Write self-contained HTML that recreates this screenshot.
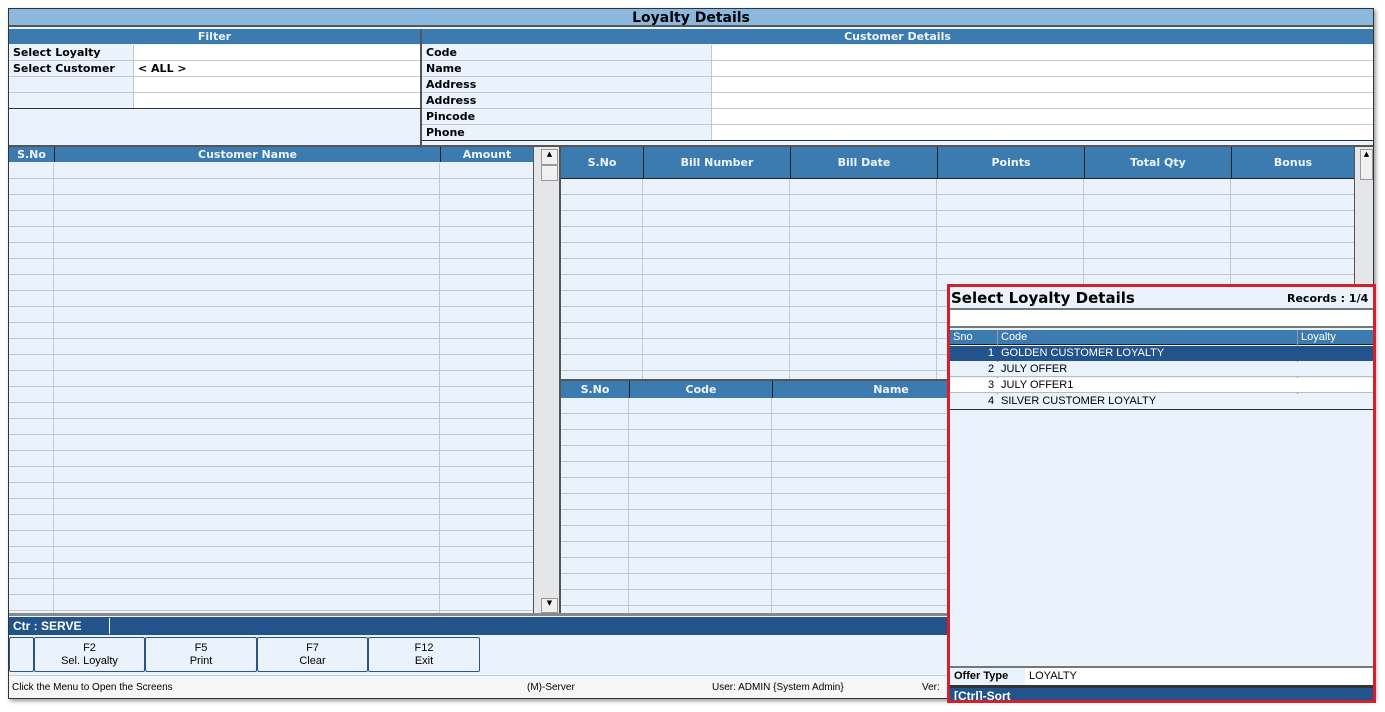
<!DOCTYPE html>
<html><head><style>
*{margin:0;padding:0;box-sizing:border-box}
body{width:1385px;height:712px;background:#fff;position:relative;overflow:hidden;font-family:"DejaVu Sans","Liberation Sans",sans-serif;font-size:11px}
.a{position:absolute}
.hd{background:#3c7bb0;color:#eef4fb;font-weight:bold;text-align:center;font-size:11px}
.b{font-weight:bold}
.vl{position:absolute;width:1px;background:#c3c8cf}
.hl{position:absolute;height:1px;background:#c3c8cf}
.btn{position:absolute;top:637px;height:35px;border:1px solid #2a5585;background:#eaf3fc;text-align:center;font-family:"Liberation Sans",sans-serif;font-size:11px;line-height:13px;padding-top:4px;border-radius:2px}
.n{font-family:"Liberation Sans",sans-serif;font-size:11px}
</style></head><body>
<div class="a" style="left:8px;top:8px;width:1366px;height:691px;border:1px solid #333;background:#eaf3fc;box-shadow:2px 2px 4px #999"></div>
<div class="a b" style="left:9px;top:9px;width:1364px;height:18px;background:#8ab8de;text-align:center;font-size:14px;line-height:18px;border-bottom:2px solid #555">Loyalty Details</div>
<div class="a hd" style="left:9px;top:29px;width:411px;height:15px;line-height:15px">Filter</div>
<div class="a hd" style="left:422px;top:29px;width:951px;height:15px;line-height:15px">Customer Details</div>
<div class="a" style="left:420px;top:29px;width:2px;height:116px;background:#555"></div>
<div class="a" style="left:134px;top:45px;width:286px;height:63px;background:#fff"></div>
<div class="hl" style="left:9px;top:60px;width:411px"></div><div class="hl" style="left:9px;top:76px;width:411px"></div><div class="hl" style="left:9px;top:92px;width:411px"></div>
<div class="a" style="left:9px;top:108px;width:411px;height:1px;background:#333"></div>
<div class="vl" style="left:133px;top:45px;height:63px"></div>
<div class="a b" style="left:13px;top:46px">Select Loyalty</div>
<div class="a b" style="left:13px;top:62px">Select Customer</div>
<div class="a b" style="left:138px;top:62px">&lt; ALL &gt;</div>
<div class="a" style="left:712px;top:45px;width:661px;height:96px;background:#fff"></div>
<div class="vl" style="left:711px;top:45px;height:96px"></div>
<div class="hl" style="left:422px;top:60px;width:951px"></div><div class="hl" style="left:422px;top:76px;width:951px"></div><div class="hl" style="left:422px;top:92px;width:951px"></div><div class="hl" style="left:422px;top:108px;width:951px"></div><div class="hl" style="left:422px;top:124px;width:951px"></div>
<div class="a" style="left:422px;top:140px;width:951px;height:1px;background:#333"></div>
<div class="a b" style="left:426px;top:46px">Code</div><div class="a b" style="left:426px;top:62px">Name</div><div class="a b" style="left:426px;top:78px">Address</div><div class="a b" style="left:426px;top:94px">Address</div><div class="a b" style="left:426px;top:110px">Pincode</div><div class="a b" style="left:426px;top:126px">Phone</div>
<div class="a" style="left:9px;top:145px;width:1364px;height:2px;background:#555"></div>
<div class="a hd" style="left:9px;top:147px;width:524px;height:15px;line-height:15px;border-bottom:1px solid #222"></div>
<div class="a hd" style="left:9px;top:147px;width:45px;line-height:15px">S.No</div>
<div class="a hd" style="left:54px;top:147px;width:386px;line-height:15px;border-left:1px solid #222">Customer Name</div>
<div class="a hd" style="left:440px;top:147px;width:93px;line-height:15px;border-left:1px solid #222">Amount</div>
<div class="a" style="left:533px;top:147px;width:26px;height:467px;background:#e4e6ea;border-left:1px solid #555"></div>
<div class="a" style="left:541px;top:149px;width:17px;height:16px;background:#f0f0f0;border:1px solid #999;font-size:7px;text-align:center">▲</div>
<div class="a" style="left:541px;top:165px;width:17px;height:16px;background:#f0f0f0;border:1px solid #999"></div>
<div class="a" style="left:541px;top:598px;width:17px;height:15px;background:#f0f0f0;border:1px solid #999;font-size:7px;text-align:center">▼</div>
<div class="vl" style="left:53px;top:163px;height:450px"></div><div class="vl" style="left:439px;top:163px;height:450px"></div>
<div class="a" style="left:9px;top:163px;width:524px;height:450px;background:repeating-linear-gradient(to bottom,transparent 0,transparent 15px,#c3c8cf 15px,#c3c8cf 16px)"></div>
<div class="a" style="left:559px;top:147px;width:2px;height:467px;background:#555"></div>
<div class="a hd" style="left:561px;top:147px;width:793px;height:32px;border-bottom:1px solid #222"></div>
<div class="a hd" style="left:561px;top:147px;width:82px;line-height:31px">S.No</div>
<div class="a hd" style="left:643px;top:147px;width:147px;line-height:31px;border-left:1px solid #222">Bill Number</div>
<div class="a hd" style="left:790px;top:147px;width:147px;line-height:31px;border-left:1px solid #222">Bill Date</div>
<div class="a hd" style="left:937px;top:147px;width:147px;line-height:31px;border-left:1px solid #222">Points</div>
<div class="a hd" style="left:1084px;top:147px;width:147px;line-height:31px;border-left:1px solid #222">Total Qty</div>
<div class="a hd" style="left:1231px;top:147px;width:123px;line-height:31px;border-left:1px solid #222">Bonus</div>
<div class="a" style="left:1354px;top:147px;width:19px;height:233px;background:#e4e6ea;border-left:1px solid #555"></div>
<div class="a" style="left:1360px;top:149px;width:13px;height:31px;background:#f0f0f0;border:1px solid #999;font-size:7px;text-align:center">▲</div>
<div class="a" style="left:561px;top:179px;width:793px;height:201px;background:repeating-linear-gradient(to bottom,transparent 0,transparent 15px,#c3c8cf 15px,#c3c8cf 16px)"></div>
<div class="vl" style="left:642px;top:179px;height:201px"></div><div class="vl" style="left:789px;top:179px;height:201px"></div><div class="vl" style="left:936px;top:179px;height:201px"></div><div class="vl" style="left:1083px;top:179px;height:201px"></div><div class="vl" style="left:1230px;top:179px;height:201px"></div>
<div class="a" style="left:561px;top:379px;width:812px;height:2px;background:#555"></div>
<div class="a hd" style="left:561px;top:381px;width:812px;height:17px;border-bottom:1px solid #222"></div>
<div class="a hd" style="left:561px;top:381px;width:68px;line-height:17px">S.No</div>
<div class="a hd" style="left:629px;top:381px;width:143px;line-height:17px;border-left:1px solid #222">Code</div>
<div class="a hd" style="left:772px;top:381px;width:237px;line-height:17px;border-left:1px solid #222">Name</div>
<div class="a" style="left:561px;top:398px;width:812px;height:215px;background:repeating-linear-gradient(to bottom,transparent 0,transparent 15px,#c3c8cf 15px,#c3c8cf 16px)"></div>
<div class="vl" style="left:628px;top:398px;height:215px"></div><div class="vl" style="left:771px;top:398px;height:215px"></div>
<div class="a" style="left:9px;top:613px;width:1364px;height:3px;background:#888"></div>
<div class="a n b" style="left:9px;top:617px;width:1364px;height:18px;background:#22538a;color:#fff;font-size:12px;line-height:18px;padding-left:4px">Ctr : SERVE</div>
<div class="a" style="left:109px;top:618px;width:1px;height:16px;background:#fff"></div>
<div class="btn" style="left:9px;width:25px"></div>
<div class="btn" style="left:34px;width:111px">F2<br>Sel. Loyalty</div>
<div class="btn" style="left:145px;width:112px">F5<br>Print</div>
<div class="btn" style="left:257px;width:111px">F7<br>Clear</div>
<div class="btn" style="left:368px;width:112px">F12<br>Exit</div>
<div class="a" style="left:9px;top:675px;width:1364px;height:23px;background:#f4f6f8;border-top:1px solid #ccc"></div>
<div class="a n" style="left:12px;top:682px;font-size:10px">Click the Menu to Open the Screens</div>
<div class="a n" style="left:527px;top:682px;font-size:10px">(M)-Server</div>
<div class="a n" style="left:712px;top:682px;font-size:10px">User: ADMIN {System Admin}</div>
<div class="a n" style="left:922px;top:682px;font-size:10px">Ver:</div>
<div class="a" style="left:947px;top:284px;width:429px;height:419px;border:3px solid #d4202c;background:#eaf3fc;overflow:hidden">
 <div class="a b" style="left:1px;top:2px;font-size:15px">Select Loyalty Details</div>
 <div class="a b" style="left:337px;top:5px;font-size:11px;white-space:nowrap">Records : 1/4</div>
 <div class="a" style="left:0;top:21px;width:426px;height:20px;background:#fff;border-top:2px solid #777;border-bottom:2px solid #777"></div>
 <div class="a n" style="left:0;top:43px;width:426px;height:15px;background:#3c7bb0;color:#fff;border-bottom:1px solid #222"></div>
 <div class="a n" style="left:3px;top:44px;color:#fff">Sno</div>
 <div class="a" style="left:47px;top:43px;width:1px;height:71px;background:#999"></div>
 <div class="a n" style="left:51px;top:44px;color:#fff">Code</div>
 <div class="a" style="left:347px;top:43px;width:1px;height:71px;background:#999"></div>
 <div class="a n" style="left:351px;top:44px;color:#fff">Loyalty</div>
 <div class="a" style="left:0;top:59px;width:426px;height:15px;background:#22538a"></div>
 <div class="a" style="left:0;top:75px;width:426px;height:15px;background:#eaf3fc;border-bottom:1px solid #bbb"></div>
 <div class="a" style="left:0;top:91px;width:426px;height:15px;background:#fff;border-bottom:1px solid #bbb"></div>
 <div class="a" style="left:0;top:107px;width:426px;height:16px;background:#eaf3fc;border-bottom:1px solid #333"></div>
 <div class="a n" style="left:38px;top:60px;color:#fff">1</div><div class="a n" style="left:51px;top:60px;color:#fff">GOLDEN CUSTOMER LOYALTY</div>
 <div class="a n" style="left:38px;top:76px">2</div><div class="a n" style="left:51px;top:76px">JULY OFFER</div>
 <div class="a n" style="left:38px;top:92px">3</div><div class="a n" style="left:51px;top:92px">JULY OFFER1</div>
 <div class="a n" style="left:38px;top:108px">4</div><div class="a n" style="left:51px;top:108px">SILVER CUSTOMER LOYALTY</div>
 <div class="a" style="left:0;top:379px;width:426px;height:2px;background:#777"></div>
 <div class="a" style="left:75px;top:381px;width:351px;height:17px;background:#fff"></div>
 <div class="a n b" style="left:4px;top:383px">Offer Type</div>
 <div class="a n" style="left:79px;top:383px">LOYALTY</div>
 <div class="a" style="left:0;top:398px;width:426px;height:3px;background:#333"></div>
 <div class="a n b" style="left:0;top:401px;width:426px;height:16px;background:#22538a;color:#fff;padding-left:4px;font-size:12px;line-height:16px">[Ctrl]-Sort</div>
</div>
</body></html>
